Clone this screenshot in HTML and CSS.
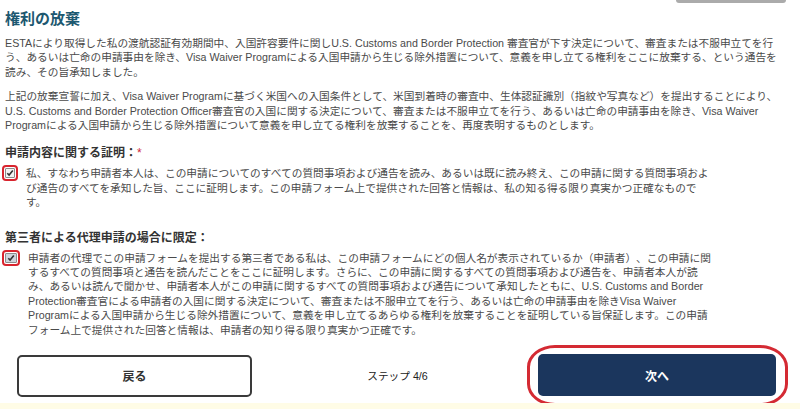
FILE: index.html
```html
<!DOCTYPE html>
<html>
  <head>
    <meta charset="utf-8">
    <link rel="stylesheet" href="styles.css">
  </head>

  <body>
    <div class="page">
      <div class="prevbtn"></div>

      <h2 class="title">権利の放棄</h2>

      <p class="para">ESTAにより取得した私の渡航認証有効期間中、入国許容要件に関しU.S. Customs and Border Protection 審査官が下す決定について、審査または不服申立てを行う、あるいは亡命の申請事由を除き、Visa Waiver Programによる入国申請から生じる除外措置について、意義を申し立てる権利をここに放棄する、という通告を<br>読み、その旨承知しました。</p>

      <p class="para second">上記の放棄宣誓に加え、Visa Waiver Programに基づく米国への入国条件として、米国到着時の審査中、生体認証識別（指紋や写真など）を提出することにより、U.S. Customs and Border Protection Officer審査官の入国に関する決定について、審査または不服申立てを行う、あるいは亡命の申請事由を除き、Visa Waiver Programによる入国申請から生じる除外措置について意義を申し立てる権利を放棄することを、再度表明するものとします。</p>

      <div class="subhead first">申請内容に関する証明：<span class="req">*</span></div>
      <label class="checkrow">
        <span class="check">
          <svg width="8" height="8" viewBox="0 0 8 8"><path d="M1.3 4.2 L3.1 6 L6.8 1.6" fill="none" stroke="#333" stroke-width="1.6"/></svg>
        </span>
        <span class="checktext">私、すなわち申請者本人は、この申請についてのすべての質問事項および通告を読み、あるいは既に読み終え、この申請に関する質問事項および通告のすべてを承知した旨、ここに証明します。この申請フォーム上で提供された回答と情報は、私の知る得る限り真実かつ正確なものです。</span>
      </label>

      <div class="subhead">第三者による代理申請の場合に限定：</div>
      <label class="checkrow">
        <span class="check dim">
          <svg width="8" height="8" viewBox="0 0 8 8"><path d="M1.3 4.2 L3.1 6 L6.8 1.6" fill="none" stroke="#333" stroke-width="1.6"/></svg>
        </span>
        <span class="checktext">申請者の代理でこの申請フォームを提出する第三者である私は、この申請フォームにどの個人名が表示されているか（申請者）、この申請に関するすべての質問事項と通告を読んだことをここに証明します。さらに、この申請に関するすべての質問事項および通告を、申請者本人が読み、あるいは読んで聞かせ、申請者本人がこの申請に関するすべての質問事項および通告について承知したともに、U.S. Customs and Border Protection審査官による申請者の入国に関する決定について、審査または不服申立てを行う、あるいは亡命の申請事由を除きVisa Waiver Programによる入国申請から生じる除外措置について、意義を申し立てるあらゆる権利を放棄することを証明している旨保証します。この申請フォーム上で提供された回答と情報は、申請者の知り得る限り真実かつ正確です。</span>
      </label>

      <div class="actions">
        <button class="backbtn">戻る</button>
        <div class="step">ステップ 4/6</div>
        <div class="nextmark">
          <button class="nextbtn">次へ</button>
        </div>
      </div>
    </div>
  </body>
</html>
```

FILE: styles.css
```css
html {
  background-color: #fffce6;
}

body {
  font-family: "Liberation Sans", "Noto Sans CJK JP", sans-serif;
  margin: 0;
  color: #4a4a4a;
  text-spacing-trim: space-all;
}

.page {
  background-color: white;
  padding: 0 0 0 5px;
}

.prevbtn {
  width: 110px;
  height: 3px;
  margin-left: auto;
  margin-right: 14px;
  background-color: #ababab;
  border-radius: 0 0 3px 3px;
}

.title {
  margin: 6px 0 7px 0;
  font-size: 15px;
  line-height: 20px;
  font-weight: 700;
  color: #1d5870;
}

.para {
  margin: 0;
  width: 783px;
  font-size: 10.7px;
  line-height: 14.4px;
}

.para.second {
  margin-top: 10px;
}

.subhead {
  margin-top: 20px;
  font-size: 12px;
  line-height: 16px;
  font-weight: 700;
  color: #333;
}

.subhead.first {
  margin-top: 13px;
}

.req {
  color: #d0283a;
  font-weight: 400;
}

.checkrow {
  display: flex;
  align-items: flex-start;
  margin-top: 5px;
}

.check {
  display: flex;
  align-items: center;
  justify-content: center;
  width: 8px;
  height: 8px;
  margin-top: 2px;
  border: 1px solid #8c8c8c;
  border-radius: 1px;
  background-color: #f2f2f2;
  outline: 2px solid #d8242e;
  outline-offset: 1px;
}

.check.dim {
  width: 10px;
  background-color: #cfd3dc;
}

.checktext {
  width: 690px;
  margin-left: 11px;
  font-size: 10.7px;
  line-height: 14.4px;
}

.actions {
  display: flex;
  align-items: center;
  margin-top: 8px;
  margin-bottom: -3px;
}

.backbtn {
  width: 235px;
  height: 42px;
  margin-left: 12px;
  background-color: white;
  border: 2px solid #3a3a3a;
  border-radius: 5px;
  font-family: "Liberation Sans", "Noto Sans CJK JP", sans-serif;
  font-size: 12px;
  font-weight: 700;
  color: #333;
}

.step {
  flex: 1;
  padding-left: 16px;
  text-align: center;
  font-size: 10.7px;
  color: #222;
}

.nextmark {
  margin-right: 12px;
  padding: 6px 9px 7px 8px;
  border: 3px solid #d42a33;
  border-radius: 28px / 22px;
}

.nextbtn {
  display: block;
  width: 238px;
  height: 42px;
  background-color: #1b365d;
  border: none;
  border-radius: 5px;
  font-family: "Liberation Sans", "Noto Sans CJK JP", sans-serif;
  font-size: 12px;
  font-weight: 700;
  color: white;
}
```
